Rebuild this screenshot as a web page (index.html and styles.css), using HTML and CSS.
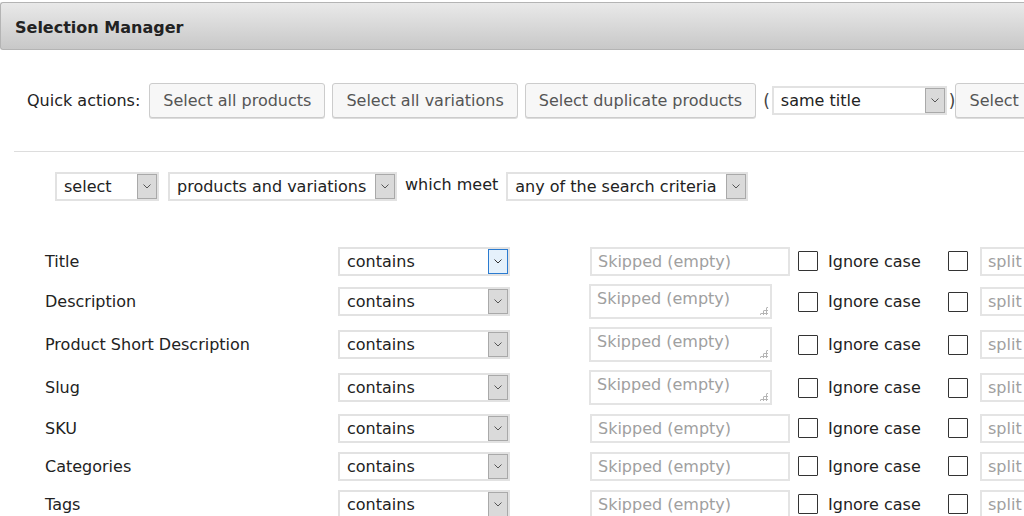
FILE: index.html
```html
<!DOCTYPE html>
<html>
<head>
<meta charset="utf-8">
<link rel="stylesheet" href="styles.css">
</head>
<body>
<div class="panel-header">Selection Manager</div>
<div class="content">
  <div class="quick-row">
    <span class="quick-label">Quick actions:</span>
    <button class="btn">Select all products</button>
    <button class="btn">Select all variations</button>
    <button class="btn">Select duplicate products</button>
    <span class="paren">(</span>
    <div class="sel sel-dup"><span class="sel-text">same title</span><span class="sel-arrow"><svg width="8" height="5" viewBox="0 0 8 5"><path d="M0.5 0.5 L4 4 L7.5 0.5" fill="none" stroke="#555" stroke-width="1"/></svg></span></div>
    <span class="paren">)</span>
    <button class="btn">Select</button>
  </div>
  <div class="divider"></div>
  <div class="mode-row">
    <div class="sel sel-mode"><span class="sel-text">select</span><span class="sel-arrow"><svg width="8" height="5" viewBox="0 0 8 5"><path d="M0.5 0.5 L4 4 L7.5 0.5" fill="none" stroke="#555" stroke-width="1"/></svg></span></div>
    <div class="sel sel-scope"><span class="sel-text">products and variations</span><span class="sel-arrow"><svg width="8" height="5" viewBox="0 0 8 5"><path d="M0.5 0.5 L4 4 L7.5 0.5" fill="none" stroke="#555" stroke-width="1"/></svg></span></div>
    <span class="which">which meet</span>
    <div class="sel sel-crit"><span class="sel-text">any of the search criteria</span><span class="sel-arrow"><svg width="8" height="5" viewBox="0 0 8 5"><path d="M0.5 0.5 L4 4 L7.5 0.5" fill="none" stroke="#555" stroke-width="1"/></svg></span></div>
  </div>

  <div class="criteria">
    <div class="crit-row">
      <span class="crit-label">Title</span>
      <div class="sel sel-op focus"><span class="sel-text">contains</span><span class="sel-arrow"><svg width="8" height="5" viewBox="0 0 8 5"><path d="M0.5 0.5 L4 4 L7.5 0.5" fill="none" stroke="#333" stroke-width="1"/></svg></span></div>
      <div class="val-cell"><input class="val-input" placeholder="Skipped (empty)"></div>
      <span class="cb"></span><span class="cb-label">Ignore case</span>
      <span class="cb cb2"></span><input class="split" placeholder="split">
    </div>
    <div class="crit-row tall">
      <span class="crit-label">Description</span>
      <div class="sel sel-op"><span class="sel-text">contains</span><span class="sel-arrow"><svg width="8" height="5" viewBox="0 0 8 5"><path d="M0.5 0.5 L4 4 L7.5 0.5" fill="none" stroke="#555" stroke-width="1"/></svg></span></div>
      <div class="val-cell"><div class="ta-wrap"><textarea class="val-ta" placeholder="Skipped (empty)"></textarea><span class="grip"></span></div></div>
      <span class="cb"></span><span class="cb-label">Ignore case</span>
      <span class="cb cb2"></span><input class="split" placeholder="split">
    </div>
    <div class="crit-row tall">
      <span class="crit-label">Product Short Description</span>
      <div class="sel sel-op"><span class="sel-text">contains</span><span class="sel-arrow"><svg width="8" height="5" viewBox="0 0 8 5"><path d="M0.5 0.5 L4 4 L7.5 0.5" fill="none" stroke="#555" stroke-width="1"/></svg></span></div>
      <div class="val-cell"><div class="ta-wrap"><textarea class="val-ta" placeholder="Skipped (empty)"></textarea><span class="grip"></span></div></div>
      <span class="cb"></span><span class="cb-label">Ignore case</span>
      <span class="cb cb2"></span><input class="split" placeholder="split">
    </div>
    <div class="crit-row tall">
      <span class="crit-label">Slug</span>
      <div class="sel sel-op"><span class="sel-text">contains</span><span class="sel-arrow"><svg width="8" height="5" viewBox="0 0 8 5"><path d="M0.5 0.5 L4 4 L7.5 0.5" fill="none" stroke="#555" stroke-width="1"/></svg></span></div>
      <div class="val-cell"><div class="ta-wrap"><textarea class="val-ta" placeholder="Skipped (empty)"></textarea><span class="grip"></span></div></div>
      <span class="cb"></span><span class="cb-label">Ignore case</span>
      <span class="cb cb2"></span><input class="split" placeholder="split">
    </div>
    <div class="crit-row">
      <span class="crit-label">SKU</span>
      <div class="sel sel-op"><span class="sel-text">contains</span><span class="sel-arrow"><svg width="8" height="5" viewBox="0 0 8 5"><path d="M0.5 0.5 L4 4 L7.5 0.5" fill="none" stroke="#555" stroke-width="1"/></svg></span></div>
      <div class="val-cell"><input class="val-input" placeholder="Skipped (empty)"></div>
      <span class="cb"></span><span class="cb-label">Ignore case</span>
      <span class="cb cb2"></span><input class="split" placeholder="split">
    </div>
    <div class="crit-row">
      <span class="crit-label">Categories</span>
      <div class="sel sel-op"><span class="sel-text">contains</span><span class="sel-arrow"><svg width="8" height="5" viewBox="0 0 8 5"><path d="M0.5 0.5 L4 4 L7.5 0.5" fill="none" stroke="#555" stroke-width="1"/></svg></span></div>
      <div class="val-cell"><input class="val-input" placeholder="Skipped (empty)"></div>
      <span class="cb"></span><span class="cb-label">Ignore case</span>
      <span class="cb cb2"></span><input class="split" placeholder="split">
    </div>
    <div class="crit-row">
      <span class="crit-label">Tags</span>
      <div class="sel sel-op"><span class="sel-text">contains</span><span class="sel-arrow"><svg width="8" height="5" viewBox="0 0 8 5"><path d="M0.5 0.5 L4 4 L7.5 0.5" fill="none" stroke="#555" stroke-width="1"/></svg></span></div>
      <div class="val-cell"><input class="val-input" placeholder="Skipped (empty)"></div>
      <span class="cb"></span><span class="cb-label">Ignore case</span>
      <span class="cb cb2"></span><input class="split" placeholder="split">
    </div>
  </div>
</div>
</body>
</html>
```

FILE: styles.css
```css
* { box-sizing: border-box; }
html, body {
  margin: 0;
  padding: 0;
  background: #fff;
  overflow: hidden;
}
body {
  font-family: "DejaVu Sans", Verdana, sans-serif;
  font-size: 16px;
  color: #333;
  width: 1024px;
  height: 516px;
}
.panel-header {
  margin-top: 2px;
  height: 48px;
  border: 1px solid #b4b4b4;
  border-right: none;
  border-radius: 3px 0 0 3px;
  background: linear-gradient(#e9e9e9, #c8c8c8);
  padding-left: 14px;
  padding-top: 3px;
  display: flex;
  align-items: center;
  font-weight: bold;
  font-size: 16px;
  color: #222;
}
.content {
  padding-left: 14px;
  overflow: hidden;
}
.quick-row {
  display: flex;
  align-items: center;
  white-space: nowrap;
  padding-left: 13px;
  margin-top: 33px;
  height: 35px;
}
.quick-label {
  margin-right: 9px;
  color: #222;
}
.btn {
  font-family: inherit;
  font-size: 16px;
  color: #555;
  background: #f7f7f7;
  border: 1px solid #cccccc;
  border-radius: 3px;
  height: 35px;
  padding: 0 13px;
  margin-right: 7px;
  flex: none;
  box-shadow: 0 1px 0 #dcdcdc;
}
.paren {
  color: #444;
  font-size: 17px;
  margin: 0;
}
.sel {
  display: flex;
  align-items: stretch;
  background: #fff;
  border: 2px solid #e2e2e2;
  flex: none;
  color: #222;
}
.sel-text {
  flex: 1;
  display: flex;
  align-items: center;
  padding-left: 7px;
  white-space: nowrap;
  overflow: hidden;
}
.sel-arrow {
  width: 20px;
  flex: none;
  background: #dadada;
  border: 1px solid #a9a9a9;
  display: flex;
  align-items: center;
  justify-content: center;
}
.focus .sel-arrow {
  background: #e5f1fb;
  border-color: #2b7bd0;
}
.sel-dup {
  width: 175px;
  height: 29px;
  margin-left: 2px;
  margin-right: 2px;
}
.divider {
  height: 1px;
  background: #dddddd;
  margin-top: 33px;
}
.mode-row {
  display: flex;
  align-items: center;
  padding-left: 41px;
  margin-top: 19px;
  height: 30px;
  white-space: nowrap;
}
.sel-mode { width: 104px; height: 29px; margin-right: 9px; }
.sel-scope { width: 229px; height: 29px; margin-right: 8px; }
.which { color: #222; margin-right: 8px; position: relative; top: -2px; }
.sel-crit { width: 242px; height: 29px; }

.criteria {
  margin-top: 45px;
  display: flex;
  flex-direction: column;
  gap: 8px;
}
.crit-row {
  display: flex;
  align-items: center;
  height: 30px;
  white-space: nowrap;
}
.crit-row.tall { height: 35px; }
.crit-label {
  width: 324px;
  padding-left: 31px;
  color: #222;
  flex: none;
}
.sel-op {
  width: 172px;
  height: 29px;
}
.sel-op .sel-text { padding-left: 7px; }
.val-cell {
  width: 208px;
  margin-left: 80px;
  flex: none;
  display: flex;
  align-items: center;
}
.val-input, .val-ta, .split {
  font-family: inherit;
  font-size: 16px;
  border: 2px solid #e4e4e4;
  background: #fff;
  color: #333;
  padding: 0 6px;
  outline: none;
}
.val-input::placeholder, .val-ta::placeholder, .split::placeholder {
  color: #a0a0a0;
}
.val-input {
  width: 200px;
  height: 29px;
}
.ta-wrap {
  position: relative;
  width: 183px;
  height: 35px;
  margin-left: -1px;
}
.val-ta {
  width: 183px;
  height: 35px;
  resize: none;
  padding: 3px 6px;
  line-height: 19px;
  overflow: hidden;
  display: block;
}
.grip {
  position: absolute;
  right: 4px;
  bottom: 4px;
  width: 9px;
  height: 9px;
  background:
    radial-gradient(circle, #b5b5b5 1px, transparent 1.2px) 0 0 / 3px 3px;
  clip-path: polygon(100% 0, 100% 100%, 0 100%);
}
.cb {
  width: 20px;
  height: 20px;
  border: 1px solid #333;
  border-radius: 1px;
  background: #fff;
  flex: none;
}
.cb-label {
  margin-left: 10px;
  width: 120px;
  color: #222;
  flex: none;
}
.cb2 { margin-left: 0; }
.split {
  width: 80px;
  height: 29px;
  margin-left: 12px;
  flex: none;
}
```
